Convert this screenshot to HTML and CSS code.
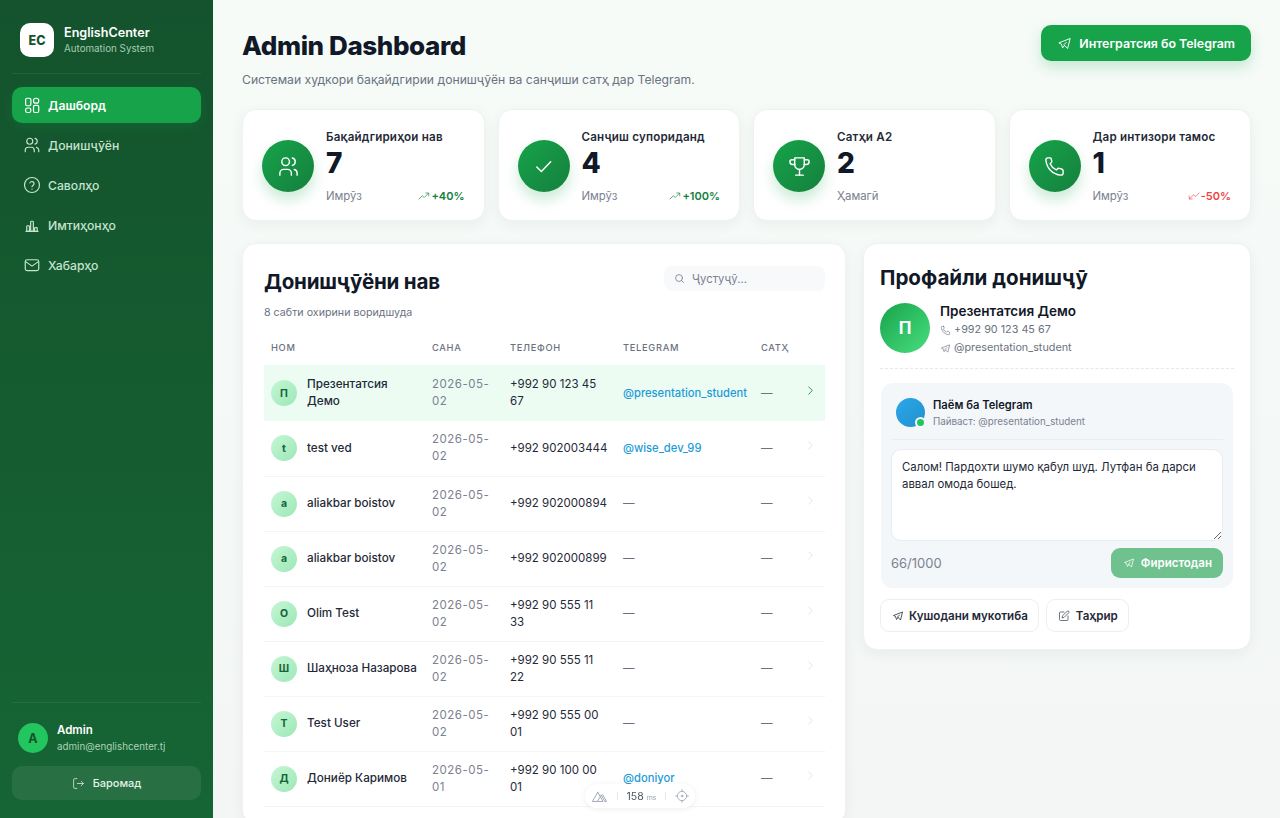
FILE: index.html
```html
<!DOCTYPE html>
<html lang="tg">
<head>
    <meta charset="UTF-8">
    <meta name="viewport" content="width=device-width, initial-scale=1.0">
    <title>Admin Dashboard</title>
    <link rel="stylesheet" href="styles.css">
</head>
<body>
    <svg class="sprite" xmlns="http://www.w3.org/2000/svg">
        <symbol id="i-grid" viewBox="0 0 24 24"><rect x="3.500" y="3" width="7" height="10" rx="2"/><rect x="14" y="3" width="7" height="6.500" rx="3"/><rect x="3.500" y="16" width="7" height="6" rx="2.500"/><rect x="14" y="12.500" width="7" height="9.500" rx="2"/></symbol>
        <symbol id="i-users" viewBox="0 0 24 24"><circle cx="9" cy="7" r="4"/><path d="M3 21v-2a4 4 0 0 1 4-4h4a4 4 0 0 1 4 4v2"/><path d="M16 3.130a4 4 0 0 1 0 7.750"/><path d="M21 21v-2a4 4 0 0 0-3-3.850"/></symbol>
        <symbol id="i-help" viewBox="0 0 24 24"><circle cx="12" cy="12" r="10"/><path d="M9.200 9.200a2.900 2.900 0 0 1 5.600 1c0 2-2.800 2.600-2.800 4"/><path d="M12 17.500v.1"/></symbol>
        <symbol id="i-chart" viewBox="0 0 24 24"><path d="M4 20.500h16"/><rect x="5" y="13" width="3.600" height="7.500" rx="1"/><rect x="10.200" y="7" width="3.600" height="13.500" rx="1"/><rect x="15.400" y="15.500" width="3.600" height="5" rx="1"/></symbol>
        <symbol id="i-mail" viewBox="0 0 24 24"><rect x="3" y="5" width="18" height="14.500" rx="2.500"/><path d="m3.500 7.500 8.500 6 8.500-6"/></symbol>
        <symbol id="i-logout" viewBox="0 0 24 24"><path d="M9 3H5a2 2 0 0 0-2 2v14a2 2 0 0 0 2 2h4"/><path d="M10 12h11"/><path d="m17 8 4 4-4 4"/></symbol>
        <symbol id="i-send" viewBox="0 0 24 24"><path d="m15 10-4 4 6 6 4-16-18 7 4 2 2 6 3-4"/></symbol>
        <symbol id="i-check" viewBox="0 0 24 24"><path d="m5 12.500 4.800 4.800L19.500 7"/></symbol>
        <symbol id="i-trophy" viewBox="0 0 24 24"><path d="M7 3h10v7a5 5 0 0 1-10 0z"/><path d="M7 5H4a2 2 0 0 0-2 2 3 3 0 0 0 3 3h2.200"/><path d="M17 5h3a2 2 0 0 1 2 2 3 3 0 0 1-3 3h-2.200"/><path d="M12 15v6"/><path d="M8 21h8"/></symbol>
        <symbol id="i-phone" viewBox="0 0 24 24"><path d="M7.500 3H5a2 2 0 0 0-2 2.200C3.900 14 10 20.100 18.800 21a2 2 0 0 0 2.200-2v-2.500a2 2 0 0 0-1.500-1.900l-2.600-.7a2 2 0 0 0-2 .6l-1 1.100a13 13 0 0 1-6.500-6.500l1.100-1a2 2 0 0 0 .6-2l-.7-2.600A2 2 0 0 0 7.500 3z"/></symbol>
        <symbol id="i-up" viewBox="0 0 24 24"><path d="m2 18 6.500-6.500 4 3.500L21 6.500"/><path d="M15.500 6H21.500v6"/></symbol>
        <symbol id="i-down" viewBox="0 0 24 24"><path d="m22 6-6.500 7-4-3.500L3 17.500"/><path d="M8.500 18H2.500v-6"/></symbol>
        <symbol id="i-search" viewBox="0 0 24 24"><circle cx="11" cy="11" r="7.500"/><path d="m21 21-4.500-4.500"/></symbol>
        <symbol id="i-chev" viewBox="0 0 24 24"><path d="m8 4 8 8-8 8"/></symbol>
        <symbol id="i-edit" viewBox="0 0 24 24"><path d="M12 4H5a2 2 0 0 0-2 2v13a2 2 0 0 0 2 2h13a2 2 0 0 0 2-2v-7"/><path d="M18.500 2.500a2.100 2.100 0 0 1 3 3L12 15l-4 1 1-4z"/></symbol>
        <symbol id="i-nuxt" viewBox="0 0 24 24"><path d="M9.500 6 2 19h7"/><path d="M9.500 6 17 19H9l5.500-9"/><path d="m14.500 10 5 9h2.500L16.500 9.500"/></symbol>
        <symbol id="i-target" viewBox="0 0 24 24"><circle cx="12" cy="12" r="8"/><circle cx="12" cy="12" r="1.500"/><path d="M12 1v3M12 20v3M1 12h3M20 12h3"/></symbol>
    </svg>

    <div class="app">
        <aside class="sidebar">
            <div class="brand">
                <div class="brand-logo">EC</div>
                <div>
                    <div class="brand-name">EnglishCenter</div>
                    <div class="brand-sub">Automation System</div>
                </div>
            </div>

            <nav class="nav">
                <a class="nav-item active" href="#"><svg class="icon"><use href="#i-grid"/></svg>Дашборд</a>
                <a class="nav-item" href="#"><svg class="icon"><use href="#i-users"/></svg>Донишҷӯён</a>
                <a class="nav-item" href="#"><svg class="icon"><use href="#i-help"/></svg>Саволҳо</a>
                <a class="nav-item" href="#"><svg class="icon"><use href="#i-chart"/></svg>Имтиҳонҳо</a>
                <a class="nav-item" href="#"><svg class="icon"><use href="#i-mail"/></svg>Хабарҳо</a>
            </nav>

            <div class="side-foot">
                <div class="user">
                    <div class="user-avatar">A</div>
                    <div>
                        <div class="user-name">Admin</div>
                        <div class="user-mail">admin@englishcenter.tj</div>
                    </div>
                </div>
                <a class="logout" href="#"><svg class="icon"><use href="#i-logout"/></svg>Баромад</a>
            </div>
        </aside>

        <main class="main">
            <header class="page-head">
                <div>
                    <h1>Admin Dashboard</h1>
                    <p>Системаи худкори бақайдгирии донишҷӯён ва санҷиши сатҳ дар Telegram.</p>
                </div>
                <a class="tg-btn" href="#"><svg class="icon"><use href="#i-send"/></svg>Интегратсия бо Telegram</a>
            </header>

            <section class="stats">
                <div class="stat">
                    <div class="stat-icon"><svg class="icon"><use href="#i-users"/></svg></div>
                    <div class="stat-body">
                        <div class="stat-label">Бақайдгириҳои нав</div>
                        <div class="stat-value">7</div>
                        <div class="stat-foot"><span>Имрӯз</span><span class="trend up"><svg class="icon"><use href="#i-up"/></svg>+40%</span></div>
                    </div>
                </div>
                <div class="stat">
                    <div class="stat-icon"><svg class="icon"><use href="#i-check"/></svg></div>
                    <div class="stat-body">
                        <div class="stat-label">Санҷиш супориданд</div>
                        <div class="stat-value">4</div>
                        <div class="stat-foot"><span>Имрӯз</span><span class="trend up"><svg class="icon"><use href="#i-up"/></svg>+100%</span></div>
                    </div>
                </div>
                <div class="stat">
                    <div class="stat-icon"><svg class="icon"><use href="#i-trophy"/></svg></div>
                    <div class="stat-body">
                        <div class="stat-label">Сатҳи A2</div>
                        <div class="stat-value">2</div>
                        <div class="stat-foot"><span>Ҳамагӣ</span></div>
                    </div>
                </div>
                <div class="stat">
                    <div class="stat-icon"><svg class="icon"><use href="#i-phone"/></svg></div>
                    <div class="stat-body">
                        <div class="stat-label">Дар интизори тамос</div>
                        <div class="stat-value">1</div>
                        <div class="stat-foot"><span>Имрӯз</span><span class="trend down"><svg class="icon"><use href="#i-down"/></svg>-50%</span></div>
                    </div>
                </div>
            </section>

            <section class="columns">
                <div class="panel list-panel">
                    <div class="list-head">
                        <div>
                            <h2>Донишҷӯёни нав</h2>
                            <p class="list-sub">8 сабти охирини воридшуда</p>
                        </div>
                        <label class="search"><svg class="icon"><use href="#i-search"/></svg><input type="text" placeholder="Ҷустуҷӯ..."></label>
                    </div>

                    <table class="students">
                        <colgroup>
                            <col class="col-name"><col class="col-date"><col class="col-phone"><col class="col-tg"><col class="col-level"><col class="col-arrow">
                        </colgroup>
                        <thead>
                            <tr><th>Ном</th><th>Сана</th><th>Телефон</th><th>Telegram</th><th>Сатҳ</th><th></th></tr>
                        </thead>
                        <tbody>
                            <tr class="selected">
                                <td><div class="who"><span class="mini">П</span>Презентатсия Демо</div></td>
                                <td class="date">2026-05-02</td><td>+992 90 123 45 67</td><td class="tg">@presentation_student</td><td class="dash">—</td>
                                <td class="arrow"><svg class="icon"><use href="#i-chev"/></svg></td>
                            </tr>
                            <tr>
                                <td><div class="who"><span class="mini">t</span>test ved</div></td>
                                <td class="date">2026-05-02</td><td>+992 902003444</td><td class="tg">@wise_dev_99</td><td class="dash">—</td>
                                <td class="arrow"><svg class="icon"><use href="#i-chev"/></svg></td>
                            </tr>
                            <tr>
                                <td><div class="who"><span class="mini">a</span>aliakbar boistov</div></td>
                                <td class="date">2026-05-02</td><td>+992 902000894</td><td class="dash">—</td><td class="dash">—</td>
                                <td class="arrow"><svg class="icon"><use href="#i-chev"/></svg></td>
                            </tr>
                            <tr>
                                <td><div class="who"><span class="mini">a</span>aliakbar boistov</div></td>
                                <td class="date">2026-05-02</td><td>+992 902000899</td><td class="dash">—</td><td class="dash">—</td>
                                <td class="arrow"><svg class="icon"><use href="#i-chev"/></svg></td>
                            </tr>
                            <tr>
                                <td><div class="who"><span class="mini">O</span>Olim Test</div></td>
                                <td class="date">2026-05-02</td><td>+992 90 555 11 33</td><td class="dash">—</td><td class="dash">—</td>
                                <td class="arrow"><svg class="icon"><use href="#i-chev"/></svg></td>
                            </tr>
                            <tr>
                                <td><div class="who"><span class="mini">Ш</span>Шаҳноза Назарова</div></td>
                                <td class="date">2026-05-02</td><td>+992 90 555 11 22</td><td class="dash">—</td><td class="dash">—</td>
                                <td class="arrow"><svg class="icon"><use href="#i-chev"/></svg></td>
                            </tr>
                            <tr>
                                <td><div class="who"><span class="mini">T</span>Test User</div></td>
                                <td class="date">2026-05-02</td><td>+992 90 555 00 01</td><td class="dash">—</td><td class="dash">—</td>
                                <td class="arrow"><svg class="icon"><use href="#i-chev"/></svg></td>
                            </tr>
                            <tr>
                                <td><div class="who"><span class="mini">Д</span>Дониёр Каримов</div></td>
                                <td class="date">2026-05-01</td><td>+992 90 100 00 01</td><td class="tg">@doniyor</td><td class="dash">—</td>
                                <td class="arrow"><svg class="icon"><use href="#i-chev"/></svg></td>
                            </tr>
                        </tbody>
                    </table>
                </div>

                <div class="panel profile-panel">
                    <h2>Профайли донишҷӯ</h2>
                    <div class="profile">
                        <div class="profile-avatar">П</div>
                        <div class="profile-info">
                            <div class="profile-name">Презентатсия Демо</div>
                            <div class="profile-line"><svg class="icon"><use href="#i-phone"/></svg>+992 90 123 45 67</div>
                            <div class="profile-line"><svg class="icon"><use href="#i-send"/></svg>@presentation_student</div>
                        </div>
                    </div>

                    <div class="chat">
                        <div class="chat-head">
                            <div class="chat-avatar"><span class="online"></span></div>
                            <div>
                                <div class="chat-title">Паём ба Telegram</div>
                                <div class="chat-sub">Пайваст: @presentation_student</div>
                            </div>
                        </div>
                        <textarea class="chat-text">Салом! Пардохти шумо қабул шуд. Лутфан ба дарси аввал омода бошед.</textarea>
                        <div class="chat-foot">
                            <span class="count">66/1000</span>
                            <a class="send" href="#"><svg class="icon"><use href="#i-send"/></svg>Фиристодан</a>
                        </div>
                    </div>

                    <div class="actions">
                        <a class="action" href="#"><svg class="icon"><use href="#i-send"/></svg>Кушодани мукотиба</a>
                        <a class="action" href="#"><svg class="icon edit"><use href="#i-edit"/></svg>Таҳрир</a>
                    </div>
                </div>
            </section>
        </main>
    </div>

    <!-- dev toolbar -->
    <div class="devbar">
        <svg class="icon nuxt"><use href="#i-nuxt"/></svg>
        <span class="devbar-sep"></span>
        <span class="devbar-ms">158 <small>ms</small></span>
        <span class="devbar-sep"></span>
        <svg class="icon target"><use href="#i-target"/></svg>
    </div>
</body>
</html>
```

FILE: styles.css
```css
* {
    margin: 0;
    padding: 0;
    box-sizing: border-box;
}

html, body {
    height: 100%;
    overflow: hidden;
}

body {
    font-family: Inter, "Noto Sans", "Liberation Sans", sans-serif;
    color: #111827;
    background: #f5f9f7;
}

a {
    text-decoration: none;
    color: inherit;
}

.sprite {
    display: none;
}

.icon {
    fill: none;
    stroke: currentColor;
    stroke-width: 1.7;
    stroke-linecap: round;
    stroke-linejoin: round;
    flex-shrink: 0;
}

.app {
    display: flex;
    height: 100vh;
}

/* sidebar */
.sidebar {
    width: 213px;
    flex-shrink: 0;
    display: flex;
    flex-direction: column;
    background: linear-gradient(180deg, #14532d 0%, #166534 100%);
    color: #fff;
    padding: 23px 12px 18px;
}

.brand {
    display: flex;
    align-items: center;
    gap: 10px;
    padding: 0 8px 16px;
    border-bottom: 1px solid rgba(255, 255, 255, 0.07);
}

.brand-logo {
    width: 34px;
    height: 34px;
    border-radius: 10px;
    background: #fff;
    color: #14532d;
    font-size: 12.5px;
    font-weight: 800;
    display: flex;
    align-items: center;
    justify-content: center;
}

.brand-name {
    font-size: 12.6px;
    font-weight: 600;
    line-height: 17px;
}

.brand-sub {
    font-size: 9.8px;
    line-height: 14px;
    margin-top: 1px;
    color: #a3cdb2;
}

.nav {
    display: flex;
    flex-direction: column;
    gap: 4px;
    margin-top: 13px;
}

.nav-item {
    display: flex;
    align-items: center;
    gap: 9px;
    height: 36px;
    padding: 0 12px;
    border-radius: 10px;
    font-size: 12.2px;
    font-weight: 500;
    color: #c5e3cf;
}

.nav-item .icon {
    width: 18px;
    height: 18px;
    margin: 0 -1.5px;
    stroke-width: 1.6;
}

.nav-item.active {
    background: #16a34a;
    color: #fff;
    font-weight: 600;
    box-shadow: 0 4px 12px rgba(22, 163, 74, 0.2);
}

.side-foot {
    margin-top: auto;
    border-top: 1px solid rgba(255, 255, 255, 0.07);
    padding-top: 19px;
}

.user {
    display: flex;
    align-items: center;
    gap: 9px;
    padding: 0 6px;
}

.user-avatar {
    width: 30px;
    height: 30px;
    border-radius: 50%;
    background: #22c55e;
    color: #14532d;
    font-size: 12.5px;
    font-weight: 700;
    display: flex;
    align-items: center;
    justify-content: center;
}

.user-name {
    font-size: 11.5px;
    font-weight: 600;
    line-height: 16px;
}

.user-mail {
    font-size: 9.8px;
    line-height: 14px;
    margin-top: 2px;
    color: #a9d3b8;
}

.logout {
    display: flex;
    align-items: center;
    justify-content: center;
    gap: 8px;
    height: 34px;
    margin-top: 12px;
    border-radius: 10px;
    background: rgba(255, 255, 255, 0.08);
    font-size: 11px;
    font-weight: 500;
    color: #e4f1e8;
}

.logout .icon {
    width: 13px;
    height: 13px;
    stroke-width: 1.4;
}

/* main */
.main {
    flex: 1;
    min-width: 0;
    padding: 25px 29px 0;
    background: linear-gradient(180deg, #f6fbf8 0%, #f3f6f5 100%);
}

.page-head {
    display: flex;
    justify-content: space-between;
    align-items: flex-start;
    height: 84px;
}

.page-head h1 {
    font-size: 26px;
    font-weight: 800;
    letter-spacing: -0.4px;
    line-height: 32px;
    margin-top: 5px;
    color: #111827;
}

.page-head p {
    font-size: 12.2px;
    line-height: 16px;
    margin-top: 10px;
    color: #6b7280;
}

.tg-btn {
    display: flex;
    align-items: center;
    gap: 7px;
    height: 36px;
    padding: 0 16px;
    border-radius: 10px;
    background: #16a34a;
    color: #fff;
    font-size: 12.4px;
    font-weight: 600;
    box-shadow: 0 6px 14px rgba(22, 163, 74, 0.22);
}

.tg-btn .icon {
    width: 15px;
    height: 15px;
    stroke-width: 1.5;
}

.stats {
    display: grid;
    grid-template-columns: repeat(4, 1fr);
    gap: 13px;
}

.stat {
    display: flex;
    align-items: center;
    gap: 12px;
    height: 112px;
    padding: 0 19px;
    background: #fff;
    border: 1px solid #eef2f0;
    border-radius: 14px;
    box-shadow: 0 4px 14px rgba(15, 40, 25, 0.05);
}

.stat-icon {
    width: 52px;
    height: 52px;
    margin-top: 2px;
    flex-shrink: 0;
    border-radius: 50%;
    background: linear-gradient(135deg, #16a34a, #15803d);
    color: #fff;
    display: flex;
    align-items: center;
    justify-content: center;
    box-shadow: 0 8px 14px rgba(22, 163, 74, 0.22);
}

.stat-icon .icon {
    width: 23px;
    height: 23px;
    stroke-width: 1.5;
}

.stat-body {
    flex: 1;
    min-width: 0;
    padding-top: 2px;
}

.stat-label {
    font-size: 11.6px;
    font-weight: 600;
    letter-spacing: 0.2px;
    line-height: 14px;
    margin-bottom: 2px;
    color: #1f2937;
}

.stat-value {
    font-size: 28px;
    font-weight: 800;
    line-height: 34px;
    color: #111827;
}

.stat-foot {
    display: flex;
    justify-content: space-between;
    align-items: center;
    margin-top: 9px;
    font-size: 11.4px;
    line-height: 14px;
    color: #7b8190;
}

.trend {
    display: flex;
    align-items: center;
    gap: 1px;
    font-size: 11px;
    font-weight: 600;
}

.trend .icon {
    width: 12px;
    height: 12px;
    stroke-width: 1.3;
}

.trend.up {
    color: #15803d;
}

.trend.down {
    color: #ef4444;
}

.columns {
    display: grid;
    grid-template-columns: 604px 388px;
    justify-content: space-between;
    align-items: start;
    margin-top: 22px;
}

.panel {
    background: #fff;
    border: 1px solid #eef2f0;
    border-radius: 14px;
    box-shadow: 0 4px 14px rgba(15, 40, 25, 0.05);
}

/* list of students */
.list-panel {
    padding: 21px 20px 16px 21px;
}

.list-head {
    display: flex;
    justify-content: space-between;
    align-items: flex-start;
}

.list-head h2 {
    font-size: 20.6px;
    font-weight: 700;
    letter-spacing: -0.2px;
    line-height: 34px;
}

.list-sub {
    font-size: 10.7px;
    line-height: 14px;
    margin-top: 7px;
    color: #6b7280;
}

.search {
    display: flex;
    align-items: center;
    gap: 7px;
    width: 161px;
    height: 25px;
    margin-top: 1px;
    padding: 0 10px;
    border-radius: 8px;
    background: #f7f9fa;
    color: #6b7280;
}

.search .icon {
    width: 11px;
    height: 11px;
    stroke-width: 1.6;
}

.search input {
    flex: 1;
    min-width: 0;
    border: 0;
    outline: 0;
    background: transparent;
    font: 11.3px Inter, "Noto Sans", sans-serif;
}

.search input::placeholder {
    color: #7b8190;
}

.students {
    width: 561px;
    margin-top: 10px;
    table-layout: fixed;
    border-collapse: collapse;
}

.col-name { width: 161px; }
.col-date { width: 78px; }
.col-phone { width: 113px; }
.col-tg { width: 138px; }
.col-level { width: 35px; }

.students th {
    height: 35px;
    padding: 0 7px;
    text-align: left;
    font-size: 9.3px;
    font-weight: 500;
    letter-spacing: 0.7px;
    text-transform: uppercase;
    color: #6b7280;
}

.students td {
    height: 55px;
    padding: 0 7px;
    font-size: 11.5px;
    line-height: 17px;
    color: #1f2937;
    border-bottom: 1px solid #f3f5f5;
}

.students .selected td {
    height: 56px;
    background: #ecfcf3;
    border-bottom: 0;
}

.students td.date {
    color: #7b8190;
    letter-spacing: 0.5px;
}

.students td.dash {
    color: #6b7280;
}

.students td.tg {
    font-size: 11.2px;
    font-weight: 500;
    color: #1d9bd8;
    white-space: nowrap;
}

.who {
    display: flex;
    align-items: center;
    gap: 10px;
    font-size: 11.7px;
    font-weight: 500;
}

.mini {
    width: 26px;
    height: 26px;
    flex-shrink: 0;
    border-radius: 50%;
    background: linear-gradient(135deg, #c6f6d5, #9be8b6);
    color: #166534;
    font-size: 10.5px;
    font-weight: 700;
    display: flex;
    align-items: center;
    justify-content: center;
}

.students td.arrow {
    text-align: right;
    color: #dde1e5;
}

.arrow .icon {
    display: block;
    width: 11px;
    height: 11px;
    margin: -6px 2px 0 auto;
    stroke-width: 1.8;
}

.students .selected td.arrow {
    color: #15803d;
}

/* profile */
.profile-panel {
    padding: 21px 16px 17px;
}

.profile-panel h2 {
    font-size: 20.6px;
    font-weight: 700;
    line-height: 26px;
}

.profile {
    display: flex;
    align-items: flex-start;
    gap: 10px;
    margin-top: 12px;
    padding-bottom: 11px;
    border-bottom: 1px dashed #e5e7eb;
}

.profile-avatar {
    width: 50px;
    height: 50px;
    border-radius: 50%;
    background: linear-gradient(135deg, #16a34a, #4ade80);
    color: #fff;
    font-size: 17px;
    font-weight: 700;
    display: flex;
    align-items: center;
    justify-content: center;
}

.profile-info {
    margin-top: -1px;
}

.profile-name {
    font-size: 13.5px;
    font-weight: 600;
    line-height: 18px;
    margin-bottom: 1px;
}

.profile-line {
    display: flex;
    align-items: center;
    gap: 3px;
    font-size: 10.8px;
    line-height: 18px;
    color: #6b7280;
}

.profile-line .icon {
    width: 11px;
    height: 11px;
    stroke-width: 1.4;
}

.chat {
    margin: 14px 1px 0;
    padding: 15px 10px 10px;
    border-radius: 12px;
    background: #f4f7fa;
}

.chat-head {
    display: flex;
    align-items: flex-start;
    gap: 8px;
    padding: 0 5px 10px;
    border-bottom: 1px solid #e9edf1;
}

.chat-avatar {
    position: relative;
    width: 29px;
    height: 29px;
    border-radius: 50%;
    background: linear-gradient(135deg, #2aa8e8, #2290d0);
}

.online {
    position: absolute;
    right: -1px;
    bottom: -1px;
    width: 11px;
    height: 11px;
    border: 2px solid #f4f7fa;
    border-radius: 50%;
    background: #22c55e;
}

.chat-title {
    font-size: 11.2px;
    font-weight: 600;
    line-height: 15px;
}

.chat-sub {
    font-size: 9.8px;
    line-height: 14px;
    margin-top: 2px;
    color: #7b8190;
}

.chat-text {
    display: block;
    width: 100%;
    height: 92px;
    margin-top: 9px;
    padding: 9px 10px;
    border: 1px solid #e8ecf0;
    border-radius: 10px;
    outline: 0;
    background: #fff;
    font: 11.4px/17px Inter, "Noto Sans", sans-serif;
    color: #1f2937;
}

.chat-foot {
    display: flex;
    justify-content: space-between;
    align-items: center;
    margin-top: 7px;
}

.count {
    font-size: 13px;
    color: #7b8190;
}

.send {
    display: flex;
    align-items: center;
    gap: 6px;
    height: 30px;
    padding: 0 11px 0 12px;
    border-radius: 9px;
    background: #6fc28e;
    color: #fff;
    font-size: 11.5px;
    font-weight: 600;
}

.send .icon {
    width: 12px;
    height: 12px;
    stroke-width: 1.5;
}

.actions {
    display: flex;
    gap: 7px;
    margin-top: 11px;
}

.action {
    display: flex;
    align-items: center;
    gap: 5px;
    height: 33px;
    padding: 0 10px 0 11px;
    border: 1px solid #eceff1;
    border-radius: 9px;
    background: #fff;
    font-size: 11.6px;
    font-weight: 600;
    color: #1f2937;
}

.action .icon {
    width: 12px;
    height: 12px;
    stroke-width: 1.6;
}

.action .edit {
    color: #4b5563;
    margin-right: 1px;
}

/* dev toolbar, sits above the page */
.devbar {
    position: fixed;
    left: 585px;
    bottom: 10px;
    width: 110px;
    height: 24px;
    display: flex;
    align-items: center;
    justify-content: center;
    gap: 9px;
    border-radius: 12px;
    background: #fff;
    box-shadow: 0 1px 6px rgba(0, 0, 0, 0.07);
    color: #9ca3af;
}

.devbar-sep {
    width: 1px;
    height: 8px;
    background: #e5e7eb;
}

.devbar-ms {
    font-size: 10.5px;
    color: #4b5563;
    white-space: nowrap;
}

.devbar-ms small {
    font-size: 7px;
    color: #9ca3af;
}

.nuxt {
    width: 17px;
    height: 17px;
    stroke-width: 1.3;
}

.target {
    width: 14px;
    height: 14px;
    stroke-width: 1.4;
}
```
